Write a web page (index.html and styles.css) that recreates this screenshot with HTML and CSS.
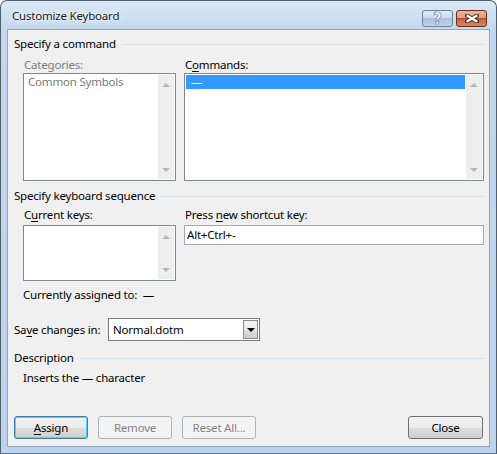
FILE: index.html
```html
<!DOCTYPE html>
<html>
<head>
<meta charset="utf-8">
<link rel="stylesheet" href="styles.css">
</head>
<body>
<div class="window">
  <div class="titlebar">
    <span class="title">Customize Keyboard</span>
    <div class="caption-buttons">
      <div class="cap-btn help"><span class="help-glyph">?</span></div>
      <div class="cap-btn close">
        <svg width="14" height="9" viewBox="0 0 14 9">
          <path d="M2 1.5 L12 7.5 M12 1.5 L2 7.5" stroke="#3b2a24" stroke-width="4" stroke-linecap="square" fill="none"/>
          <path d="M2.5 1.8 L11.5 7.2 M11.5 1.8 L2.5 7.2" stroke="#ffffff" stroke-width="2.2" stroke-linecap="square" fill="none"/>
        </svg>
      </div>
    </div>
  </div>
  <div class="client">
    <div class="group-header"><span>Specify a command</span></div>
    <div class="cols top-cols">
      <div class="col">
        <div class="label disabled">Categories:</div>
        <div class="listbox tall">
          <div class="items">
            <div class="item disabled">Common Symbols</div>
          </div>
          <div class="vscroll"><span class="arrow up"></span><span class="arrow down"></span></div>
        </div>
      </div>
      <div class="col">
        <div class="label">C<u>o</u>mmands:</div>
        <div class="listbox tall">
          <div class="items">
            <div class="item selected">—</div>
          </div>
          <div class="vscroll"><span class="arrow up"></span><span class="arrow down"></span></div>
        </div>
      </div>
    </div>

    <div class="group-header second"><span>Specify keyboard sequence</span></div>
    <div class="cols mid-cols">
      <div class="col">
        <div class="label">C<u>u</u>rrent keys:</div>
        <div class="listbox short">
          <div class="items"></div>
          <div class="vscroll"><span class="arrow up"></span><span class="arrow down"></span></div>
        </div>
      </div>
      <div class="col">
        <div class="label">Press <u>n</u>ew shortcut key:</div>
        <div class="textbox">Alt+Ctrl+-</div>
      </div>
    </div>
    <div class="assigned">Currently assigned to:&nbsp;&nbsp;—</div>

    <div class="save-row">
      <span class="save-label">Sa<u>v</u>e changes in:</span>
      <div class="combo">
        <span class="combo-value">Normal.dotm</span>
        <span class="combo-btn"><span class="combo-arrow"></span></span>
      </div>
    </div>

    <div class="group-header third"><span>Description</span></div>
    <div class="description">Inserts the — character</div>

    <div class="buttons">
      <div class="btn default"><u>A</u>ssign</div>
      <div class="btn disabled-btn">Remove</div>
      <div class="btn disabled-btn">Reset All...</div>
      <div class="spacer"></div>
      <div class="btn close-btn">Close</div>
    </div>
  </div>
</div>
</body>
</html>
```

FILE: styles.css
```css
html, body {
  margin: 0;
  padding: 0;
}
body {
  width: 497px;
  height: 454px;
  overflow: hidden;
  font-family: "Noto Sans", "Open Sans", sans-serif;
  font-size: 11.5px;
  letter-spacing: -0.2px;
  color: #000;
  background: #ffffff;
}
u { text-decoration: underline; text-underline-offset: 2px; }

.window {
  width: 497px;
  height: 454px;
  box-sizing: border-box;
  border: 1px solid #4f5f70;
  border-bottom-color: #2a8ea6;
  border-radius: 7px 7px 0 0;
  background: linear-gradient(to bottom, #dce9f6 0px, #cfe0f2 14px, #c3d8ee 30px, #bcd3eb 100%);
  padding: 0 6px 6px 6px;
  display: flex;
  flex-direction: column;
}

.titlebar {
  height: 28px;
  display: flex;
  align-items: flex-start;
  justify-content: space-between;
}
.title {
  margin-left: 5px;
  margin-top: 6px;
  line-height: 18px;
  color: #1a1a1a;
  text-shadow: 0 0 6px #ffffff, 0 0 3px #ffffff;
}
.caption-buttons {
  display: flex;
  gap: 3px;
  margin-top: 9px;
  margin-right: 3px;
}
.cap-btn {
  height: 17px;
  box-sizing: border-box;
  border-radius: 3px;
  display: flex;
  align-items: center;
  justify-content: center;
}
.cap-btn.help {
  width: 31px;
  border: 1px solid #6d8199;
  background: linear-gradient(to bottom, #dfeaf6 0%, #cbdcee 45%, #aac4e0 50%, #bcd3ea 100%);
}
.help-glyph {
  font-family: "DejaVu Sans", sans-serif;
  font-weight: bold;
  font-size: 15px;
  line-height: 15px;
  letter-spacing: 0;
  color: #ffffff;
  -webkit-text-stroke: 0.6px #6b7684;
  margin-top: 1px;
}
.cap-btn.close {
  width: 31px;
  border: 1px solid #6b2a1c;
  background: linear-gradient(to bottom, #e9b69c 0%, #dda07f 45%, #b94a2e 50%, #c86b45 60%, #d7885d 100%);
}

.client {
  flex: 1;
  background: #f0f0f0;
  border: 1px solid #90a6bd;
  padding: 0 5px 0 6px;
  display: flex;
  flex-direction: column;
}

.group-header {
  margin-top: 6px;
  height: 16px;
  line-height: 16px;
  display: flex;
  align-items: center;
  gap: 6px;
  color: #000;
}
.group-header::after {
  content: "";
  flex: 1;
  height: 1px;
  background: #d8e0e6;
}
.group-header.second { margin-top: 7px; }
.group-header.third { margin-top: 9px; }

.cols {
  display: grid;
  grid-template-columns: 153px 1fr;
  column-gap: 8px;
  padding-left: 9px;
}
.top-cols { margin-top: 5px; }
.mid-cols { margin-top: 3px; }

.col {
  display: flex;
  flex-direction: column;
}
.label {
  height: 16px;
  line-height: 16px;
  padding-left: 1px;
}
.mid-cols .label { margin-bottom: 2px; }
.disabled { color: #7a7a7a; }

.listbox {
  display: flex;
  box-sizing: border-box;
  border: 1px solid #828790;
  background: #ffffff;
}
.listbox.tall { height: 108px; }
.listbox.short { height: 56px; }
.items {
  flex: 1;
  padding: 1px;
}
.item {
  height: 14px;
  line-height: 14px;
  padding-left: 3px;
}
.item.selected {
  background: #3399ff;
  color: #ffffff;
  padding-left: 5px;
}
.vscroll {
  width: 16px;
  margin: 1px 1px 1px 0;
  background: #eeeeee;
  display: flex;
  flex-direction: column;
  justify-content: space-between;
  align-items: center;
  padding: 8px 0 7px 0;
}
.arrow {
  width: 0;
  height: 0;
  border-left: 4px solid transparent;
  border-right: 4px solid transparent;
}
.arrow.up { border-bottom: 4px solid #b6b6b6; }
.arrow.down { border-top: 4px solid #b6b6b6; }

.textbox {
  height: 20px;
  box-sizing: border-box;
  border: 1px solid #a5a8ae;
  background: #ffffff;
  line-height: 18px;
  padding-left: 2px;
}

.assigned {
  margin-top: 6px;
  padding-left: 9px;
  height: 16px;
  line-height: 16px;
}

.save-row {
  margin-top: 15px;
  height: 23px;
  display: flex;
  align-items: center;
}
.save-label {
  width: 94px;
  flex-shrink: 0;
  white-space: nowrap;
}
.combo {
  width: 152px;
  flex-shrink: 0;
  height: 23px;
  box-sizing: border-box;
  border: 1px solid #7a7a7a;
  background: #ffffff;
  display: flex;
  align-items: center;
  justify-content: space-between;
  padding: 1px;
}
.combo-value {
  padding-left: 3px;
  line-height: 19px;
}
.combo-btn {
  width: 15px;
  height: 19px;
  box-sizing: border-box;
  border: 1px solid #8c8c8c;
  background: linear-gradient(to bottom, #f3f3f3 0%, #ebebeb 50%, #dddddd 51%, #cfcfcf 100%);
  display: flex;
  align-items: center;
  justify-content: center;
}
.combo-arrow {
  width: 0;
  height: 0;
  border-left: 4px solid transparent;
  border-right: 4px solid transparent;
  border-top: 4px solid #000;
}

.description {
  margin-top: 4px;
  padding-left: 9px;
  height: 16px;
  line-height: 16px;
}

.buttons {
  margin-top: 30px;
  display: flex;
  gap: 10px;
  padding-right: 1px;
}
.spacer { flex: 1; }
.btn {
  width: 74px;
  height: 23px;
  box-sizing: border-box;
  border: 1px solid #707070;
  border-radius: 3px;
  background: linear-gradient(to bottom, #f2f2f2 0%, #ebebeb 50%, #dddddd 51%, #cfcfcf 100%);
  text-align: center;
  line-height: 21px;
}
.btn.default {
  border-color: #3c7fb1;
  box-shadow: inset 0 0 0 1px #48d4fd;
}
.btn.disabled-btn {
  border-color: #adb2b5;
  background: #f4f4f4;
  color: #838383;
}
.btn.close-btn { width: 75px; }
```
